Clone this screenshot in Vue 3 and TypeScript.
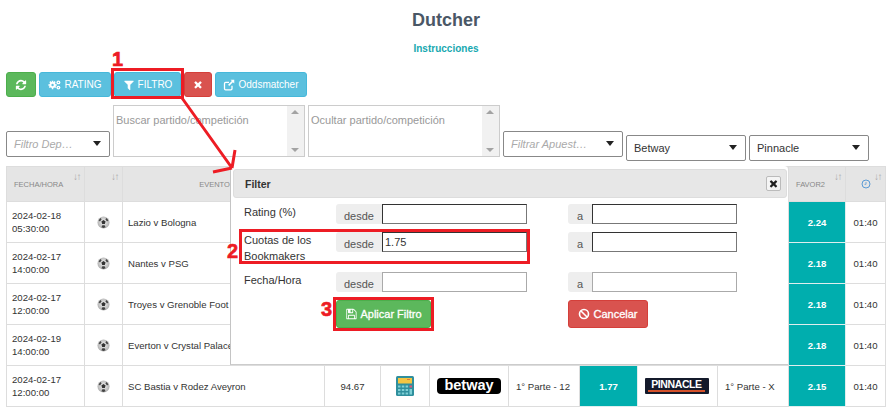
<script setup lang="ts">
interface Row { date: string; time: string; event: string; favor2: string; left: string }
const rows: Row[] = [
  { date: '2024-02-18', time: '05:30:00', event: 'Lazio v Bologna', favor2: '2.24', left: '01:40' },
  { date: '2024-02-17', time: '14:00:00', event: 'Nantes v PSG', favor2: '2.18', left: '01:40' },
  { date: '2024-02-17', time: '12:00:00', event: 'Troyes v Grenoble Foot 38', favor2: '2.18', left: '01:40' },
  { date: '2024-02-19', time: '14:00:00', event: 'Everton v Crystal Palace', favor2: '2.18', left: '01:40' },
  { date: '2024-02-17', time: '12:00:00', event: 'SC Bastia v Rodez Aveyron', favor2: '2.15', left: '01:40' },
]
const refresh = 'M1639 1056q0 5-1 7-64 268-268 434.5t-478 166.5q-146 0-282.5-55t-243.5-157l-129 129q-19 19-45 19t-45-19-19-45v-448q0-26 19-45t45-19h448q26 0 45 19t19 45-19 45l-137 137q71 66 161 102t187 36q134 0 250-65t186-179q11-17 53-117 8-23 30-23h192q13 0 22.5 9.5t9.5 22.5zm25-800v448q0 26-19 45t-45 19h-448q-26 0-45-19t-19-45 19-45l138-138q-148-137-349-137-134 0-250 65t-186 179q-11 17-53 117-8 23-30 23h-199q-13 0-22.5-9.5t-9.5-22.5v-7q65-268 270-434.5t480-166.5q146 0 284 55.5t245 156.5l130-129q19-19 45-19t45 19 19 45z'
const times = 'M1298 1322q0 40-28 68l-136 136q-28 28-68 28t-68-28l-294-294-294 294q-28 28-68 28t-68-28l-136-136q-28-28-28-68t28-68l294-294-294-294q-28-28-28-68t28-68l136-136q28-28 68-28t68 28l294 294 294-294q28-28 68-28t68 28l136 136q28 28 28 68t-28 68l-294 294 294 294q28 28 28 68z'
const funnel = 'M1403 295q17 41-14 70l-493 493v742q0 42-39 59-13 5-25 5-27 0-45-19l-256-256q-19-19-19-45v-486l-493-493q-31-29-14-70 17-39 59-39h1280q42 0 59 39z'
const save = 'M512 1536h768v-384h-768v384zm896 0h128v-896q0-14-10-38.5t-20-34.5l-281-281q-10-10-34-20t-39-10v416q0 40-28 68t-68 28h-576q-40 0-68-28t-28-68v-416h-128v1280h128v-416q0-40 28-68t68-28h832q40 0 68 28t28 68v416zm-384-928v-320q0-13-9.5-22.5t-22.5-9.5h-192q-13 0-22.5 9.5t-9.5 22.5v320q0 13 9.5 22.5t22.5 9.5h192q13 0 22.5-9.5t9.5-22.5zm640 32v928q0 40-28 68t-68 28h-1344q-40 0-68-28t-28-68v-1344q0-40 28-68t68-28h928q40 0 88 20t76 48l280 280q28 28 48 76t20 88z'
</script>

<template>
  <div class="page">
    <h1 class="title">Dutcher</h1>
    <div class="link">Instrucciones</div>

    <div class="toolbar">
      <button class="btn green icon-only"><svg class="ic" viewBox="0 0 1792 1792"><path :d="refresh" fill="currentColor" /></svg></button>
      <button class="btn blue w72">
        <svg class="ic cogs" viewBox="0 0 20 16"><g fill="currentColor"><circle cx="7" cy="8" r="4.6" /><path d="M5.800 1.600h2.400v13H5.800zM.6 6.800h12.800v2.400H.6zM2 3.700l1.700-1.700 9 9-1.700 1.700zM11.900 3.700 10.200 2l-9 9 1.700 1.700z" /><circle cx="16" cy="4" r="3" /><circle cx="16" cy="12" r="3" /></g><circle cx="7" cy="8" r="1.800" fill="#5bc0de" /><circle cx="16" cy="4" r="1" fill="#5bc0de" /><circle cx="16" cy="12" r="1" fill="#5bc0de" /></svg>
        RATING
      </button>
      <button class="btn blue w67"><svg class="ic" viewBox="0 0 1408 1792"><path :d="funnel" fill="currentColor" /></svg> FILTRO</button>
      <button class="btn red icon-only w28"><svg class="ic small" viewBox="0 0 1408 1792"><path :d="times" fill="currentColor" /></svg></button>
      <button class="btn blue w92">
        <svg class="ic" viewBox="0 0 16 16"><path d="M12 9v4a1.500 1.500 0 0 1-1.500 1.500h-7A1.500 1.500 0 0 1 2 13V6a1.500 1.500 0 0 1 1.500-1.500H8" fill="none" stroke="currentColor" stroke-width="1.700" /><path d="M10 1h5v5l-1.800-1.800-5 5-1.400-1.400 5-5z" fill="currentColor" /></svg>
        Oddsmatcher
      </button>
    </div>

    <div class="filters">
      <div class="select sel-sport lifted"><span class="ph">Filtro Dep…</span><i class="caret"></i></div>
      <div class="area area-a lifted"><span class="area-ph">Buscar partido/competición</span><div class="bar"><i class="up"></i><i class="down"></i></div></div>
      <div class="area area-b lifted"><span class="area-ph">Ocultar partido/competición</span><div class="bar"><i class="up"></i><i class="down"></i></div></div>
      <div class="select sel-bet lifted"><span class="ph">Filtrar Apuest…</span><i class="caret"></i></div>
      <div class="select sel-book"><span class="val">Betway</span><i class="caret"></i></div>
      <div class="select sel-book"><span class="val">Pinnacle</span><i class="caret"></i></div>
    </div>

    <table class="grid">
      <colgroup>
        <col style="width:78px" /><col style="width:38px" /><col style="width:202px" /><col style="width:56px" />
        <col style="width:49px" /><col style="width:79px" /><col style="width:71px" /><col style="width:58px" />
        <col style="width:80px" /><col style="width:71px" /><col style="width:57px" /><col style="width:40px" />
      </colgroup>
      <thead>
        <tr>
          <th class="left">FECHA/HORA<span class="sort">↓↑</span></th>
          <th><span class="sort">↓↑</span></th>
          <th class="ev">EVENTO<span class="sort">↓↑</span></th>
          <th></th><th></th><th></th><th></th><th></th><th></th><th></th>
          <th class="left">FAVOR2<span class="sort">↓↑</span></th>
          <th><svg class="clock" viewBox="0 0 10 10"><circle cx="5" cy="5" r="4" fill="none" stroke="#5b9bd5" /><path d="M5 3v2.300H3.500" fill="none" stroke="#5b9bd5" stroke-width=".8" /></svg><span class="sort">↓↑</span></th>
        </tr>
      </thead>
      <tbody>
        <tr v-for="(r, i) in rows" :key="i">
          <td class="date">{{ r.date }}<br />{{ r.time }}</td>
          <td class="c"><svg class="ball" viewBox="0 0 14 14"><defs><radialGradient id="bg" cx=".5" cy=".45" r=".6"><stop offset="0" stop-color="#f4f4f4" /><stop offset="1" stop-color="#a8a8a8" /></radialGradient></defs><circle cx="7" cy="7" r="6.500" fill="url(#bg)" /><path d="M7 4.300 9.300 6 8.400 8.700H5.600L4.700 6z" fill="#333" /><path d="M1.700 4.500 3.800 2.200 5 3.400 3.200 6zM12.300 4.500 10.200 2.200 9 3.400 10.800 6zM4.800 12.200l1-2.200h2.400l1 2.200-2.200.8z" fill="#444" /></svg></td>
          <td class="ev-cell">{{ r.event }}</td>
          <template v-if="i === 4">
            <td class="c">94.67</td>
            <td class="c"><svg class="calc" viewBox="0 0 18 20"><rect width="18" height="20" rx="1.500" fill="#2f8f9d" /><rect x="2" y="2" width="14" height="5.500" fill="#f4c542" /><rect x="11" y="3" width="3" height="1" fill="#e07a3a" /><g fill="#7fd0d6"><rect x="2" y="9.500" width="2.500" height="2" /><rect x="5.800" y="9.500" width="2.500" height="2" /><rect x="9.600" y="9.500" width="2.500" height="2" /><rect x="2" y="13" width="2.500" height="2" /><rect x="5.800" y="13" width="2.500" height="2" /><rect x="9.600" y="13" width="2.500" height="2" /><rect x="2" y="16.500" width="2.500" height="2" /><rect x="5.800" y="16.500" width="2.500" height="2" /><rect x="9.600" y="16.500" width="2.500" height="2" /></g><rect x="13.500" y="9.500" width="2.500" height="2" fill="#e0567a" /><rect x="13.500" y="13" width="2.500" height="5.500" fill="#7fd0d6" /></svg></td>
            <td class="c"><span class="betway">betway</span></td>
            <td class="mk">1° Parte - 12</td>
            <td class="odd">1.77</td>
            <td class="c"><span class="pinnacle"><span class="pin-name">PINNACLE</span><i class="pin-bar"></i></span></td>
            <td class="mk">1° Parte - X</td>
          </template>
          <template v-else><td></td><td></td><td></td><td></td><td></td><td></td><td></td></template>
          <td class="odd">{{ r.favor2 }}</td>
          <td class="c">{{ r.left }}</td>
        </tr>
      </tbody>
    </table>

    <div class="modal">
      <div class="modal-head">
        <span>Filter</span>
        <button class="close"><svg viewBox="0 0 1408 1792"><path :d="times" fill="#222" /></svg></button>
      </div>
      <div class="form">
        <label class="lbl">Rating (%)</label>
        <div class="group"><span class="addon">desde</span><input class="inp active" /></div>
        <div class="group to"><span class="addon">a</span><input class="inp active" /></div>

        <label class="lbl">Cuotas de los Bookmakers</label>
        <div class="group"><span class="addon">desde</span><input class="inp active" value="1.75" /></div>
        <div class="group to"><span class="addon">a</span><input class="inp active" /></div>

        <label class="lbl">Fecha/Hora</label>
        <div class="group"><span class="addon">desde</span><input class="inp" /></div>
        <div class="group to"><span class="addon">a</span><input class="inp" /></div>

        <span></span>
        <div class="act"><button class="btn green big"><svg class="ic" viewBox="0 0 1664 1792"><path :d="save" fill="currentColor" /></svg> Aplicar Filtro</button></div>
        <div class="act to"><button class="btn red big cancel"><svg class="ic" viewBox="0 0 16 16"><circle cx="8" cy="8" r="6" fill="none" stroke="currentColor" stroke-width="2.200" /><path d="m4 4 8 8" stroke="currentColor" stroke-width="2.200" /></svg> Cancelar</button></div>
      </div>
    </div>

    <svg class="notes" viewBox="0 0 892 408" width="892" height="408">
      <g fill="none" stroke="#ed1c24" stroke-width="3">
        <rect x="112.500" y="69.500" width="70" height="28" />
        <rect x="240.500" y="230.500" width="288" height="32" />
        <rect x="334.500" y="298.500" width="98" height="31" />
        <path d="M182 98 232 168M235 150l-3 18M213 172l19-4" />
      </g>
      <g fill="#ed1c24" stroke="#ed1c24" stroke-width=".6" font-family="'Liberation Sans', Arial, sans-serif" font-weight="700" font-size="20">
        <text x="112" y="66">1</text>
        <text x="227" y="258">2</text>
        <text x="321" y="316">3</text>
      </g>
    </svg>
  </div>
</template>

<style>
html, body { margin: 0; overflow: hidden; background: #fff; }
</style>

<style scoped>
.page { position: relative; width: 892px; height: 408px; overflow: hidden; font-family: "Liberation Sans", Arial, sans-serif; color: #333; font-size: 10px; box-sizing: border-box; padding: 0 6px; }
.title { margin: 0; padding-top: 9px; height: 33px; box-sizing: border-box; text-align: center; font-size: 18px; line-height: 22px; font-weight: 700; color: #4a5766; }
.link { height: 39px; padding-top: 9px; box-sizing: border-box; text-align: center; font-size: 10px; line-height: 14px; font-weight: 700; color: #17a8b0; }
.toolbar { display: flex; gap: 3px; height: 25px; }
.btn { display: inline-flex; align-items: center; justify-content: center; gap: 3px; border: 1px solid transparent; border-radius: 3px; color: #fff; font: 400 10px "Liberation Sans", Arial, sans-serif; padding: 0; box-sizing: border-box; }
.green { background: #5cb85c; border-color: #4cae4c; }
.blue { background: #5bc0de; border-color: #46b8da; }
.red { background: #d9534f; border-color: #d43f3a; }
.icon-only { width: 30px; }
.w72 { width: 72px; }
.w67 { width: 67px; }
.w28 { width: 28px; }
.w92 { width: 92px; }
.ic { width: 12px; height: 12px; }
.ic.cogs { width: 13px; }
.ic.small { width: 10px; height: 11px; }
.filters { display: flex; align-items: flex-end; gap: 3px; height: 56px; margin-top: 8px; }
.lifted { margin-bottom: 4px; }
.select { position: relative; height: 26px; box-sizing: border-box; border: 1px solid #888; border-radius: 2px; background: #fff; display: flex; align-items: center; padding-left: 7px; font-size: 11px; }
.sel-sport { width: 104px; }
.sel-bet { width: 120px; }
.sel-book { width: 120px; }
.ph { font-style: italic; color: #aaa; }
.val { color: #333; }
.caret { position: absolute; right: 8px; top: 9px; border: 4px solid transparent; border-top: 5px solid #222; border-bottom: 0; }
.area { position: relative; height: 52px; box-sizing: border-box; border: 1px solid #ccc; background: #fff; padding: 8px 2px; font-size: 11px; }
.area-a { width: 192px; }
.area-b { width: 192px; }
.area-ph { color: #999; font-weight: 400; }
.bar { position: absolute; right: 0; top: 0; bottom: 0; width: 17px; background: #f1f1f1; }
.up, .down { position: absolute; left: 4px; border: 4px solid transparent; }
.up { top: 4px; border-top: 0; border-bottom: 4px solid #a3a3a3; }
.down { bottom: 4px; border-bottom: 0; border-top: 4px solid #a3a3a3; }
.grid { width: 879px; margin-top: 5px; table-layout: fixed; border-collapse: collapse; font-size: 9.6px; color: #333; }
.grid th { height: 34px; background: #e5e5e5; border: 1px solid #ddd; position: relative; font-size: 7.5px; font-weight: 400; color: #888; text-align: center; padding: 0; }
.grid th.left { text-align: left; padding-left: 7px; }
.grid th.ev { padding-right: 18px; }
.grid td { height: 41px; border: 1px solid #ddd; padding: 0; box-sizing: border-box; line-height: 13px; }
.sort { position: absolute; right: 4px; top: 4px; font-size: 10px; color: #aaa; letter-spacing: -1.500px; }
.clock { width: 10px; height: 10px; vertical-align: -3px; }
.date { padding-left: 5px !important; line-height: 13px !important; }
.c { text-align: center; }
.mk { padding-left: 7px !important; white-space: nowrap; }
.ev-cell { padding-left: 5px !important; white-space: nowrap; overflow: hidden; }
.odd { background: #00aeae; color: #fff; font-weight: 700; text-align: center; border-color: #dfeeee !important; }
.ball { width: 13px; height: 13px; vertical-align: middle; }
.calc { width: 18px; height: 20px; vertical-align: middle; }
.betway { display: inline-block; width: 64px; height: 16px; line-height: 15px; background: #000; border-radius: 4px; color: #fff; font-weight: 700; font-size: 14.500px; }
.pinnacle { display: inline-flex; flex-direction: column; align-items: center; width: 64px; height: 16px; margin-right: 2px; box-sizing: border-box; padding-top: 1px; background: #141a2b; border-radius: 1px; vertical-align: middle; }
.pin-name { color: #fff; font-weight: 700; font-size: 10.500px; line-height: 10px; letter-spacing: -.4px; }
.pin-bar { display: block; width: 57px; height: 2px; margin-top: 1px; background: #d4502a; }
.modal { position: absolute; left: 230px; top: 166px; width: 558px; height: 199px; box-sizing: border-box; background: #fff; border-left: 1px solid #c4c4c4; border-bottom: 1px solid #ccc; padding: 3px 1px 0 2px; border-top-right-radius: 4px; }
.modal-head { display: flex; align-items: center; justify-content: space-between; height: 29px; box-sizing: border-box; background: #e7e7e7; border: 1px solid #ddd; border-radius: 3px; padding: 0 5px 0 11px; font-size: 10.500px; font-weight: 700; color: #333; }
.close { width: 15px; height: 15px; padding: 2px; background: #f5f5f5; border: 1px solid #bbb; border-radius: 2px; display: flex; align-items: center; justify-content: center; }
.close svg { width: 10px; height: 11px; }
.form { display: grid; grid-template-columns: 92px 191px 210px; grid-template-rows: 28px 40px 28px 28px; padding: 6px 0 0 11px; font-size: 11px; color: #333; }
.lbl { line-height: 16px; padding-top: 0; width: 88px; }
.group { display: flex; height: 20px; }
.group.to, .act.to { margin-left: 41px; }
.addon { background: #eee; color: #555; border-radius: 3px 0 0 3px; display: flex; align-items: flex-end; justify-content: center; line-height: 16px; font-size: 11px; }
.group .addon { width: 46px; }
.group.to .addon { width: 24px; }
.inp { border: 1px solid #aaa; height: 20px; box-sizing: border-box; padding: 0 2px; width: 145px; font: 11px "Liberation Sans", Arial, sans-serif; color: #333; outline: none; background: #fff; }
.group.to .inp { width: 145px; }
.inp.active { border-color: #333 #777 #777 #333; }
.big { height: 28px; width: 95px; font-size: 11px; gap: 3px; -webkit-text-stroke: .3px #fff; }
.cancel { width: 80px; }
.notes { position: absolute; left: 0; top: 0; pointer-events: none; }
</style>
